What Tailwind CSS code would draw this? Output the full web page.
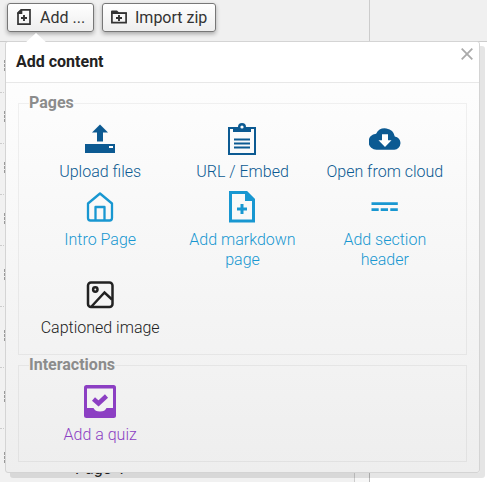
<!DOCTYPE html>
<html lang="en">
<head>
<meta charset="utf-8">
<title>Add content</title>
<script src="https://cdn.jsdelivr.net/npm/@tailwindcss/browser@4"></script>
</head>
<body class="relative h-[482px] w-[487px] overflow-hidden bg-white font-['Roboto',sans-serif] text-base leading-5 text-[#222]">
<header class="flex h-[42px] border-b border-[#ccc] bg-[#f0f0f0]">
  <div class="flex w-[370px] items-start gap-2 border-r border-[#ccc] pt-[3px] pl-[7px]">
    <button class="flex h-[29px] w-[87px] items-center rounded-[3px] border border-[#777] bg-linear-to-b from-white to-[#eee] pl-[9px] text-[#333] shadow-[0_2px_4px_rgba(0,0,0,0.3)]">
      <svg class="-mt-px mr-[9px] h-4 w-[14px]" viewBox="0 0 14 16" fill="none" stroke="#333"><path stroke-width="1.700" d="M4.500.9H13v14.200H1V4.300z"/><path fill="#333" stroke="none" d="M.2 5V3.500L4 0h1.300v5z"/><path stroke-width="1.900" d="M7 6v6M4 9h6"/></svg>
      <span>Add ...</span>
    </button>
    <button class="flex h-[29px] w-[114px] items-center rounded-[3px] border border-[#777] bg-linear-to-b from-white to-[#eee] pl-2 text-[#333] shadow-[0_2px_4px_rgba(0,0,0,0.3)]">
      <svg class="-mt-[2px] mr-2 h-[14px] w-4" viewBox="0 0 16 14" fill="none" stroke="#333"><path stroke-width="1.700" d="M.9 3.100h14.200v9.600H.9z"/><path fill="#333" stroke="none" d="M0 3V1.500Q0 .5 1 .5h5l2 2h7q1 0 1 1.300H0z"/><path stroke-width="1.900" d="M8 5v6M5 8h6"/></svg>
      <span class="whitespace-nowrap">Import zip</span>
    </button>
  </div>
</header>
<main class="flex h-[440px]">
  <div class="w-[355px] border-r border-[#ccc] bg-[#f1f1f1]">
    <div class="h-[51px] border-b border-dotted border-[#ccc] pt-[18px] pl-1"><i class="block h-[11px] w-px bg-[repeating-linear-gradient(#999_0_3px,transparent_3px_4px)]"></i></div>
    <div class="h-[51px] border-b border-dotted border-[#ccc] pt-[18px] pl-1"><i class="block h-[11px] w-px bg-[repeating-linear-gradient(#999_0_3px,transparent_3px_4px)]"></i></div>
    <div class="h-[51px] border-b border-dotted border-[#ccc] pt-[18px] pl-1"><i class="block h-[11px] w-px bg-[repeating-linear-gradient(#999_0_3px,transparent_3px_4px)]"></i></div>
    <div class="h-[51px] border-b border-dotted border-[#ccc] pt-[18px] pl-1"><i class="block h-[11px] w-px bg-[repeating-linear-gradient(#999_0_3px,transparent_3px_4px)]"></i></div>
    <div class="h-[61px] border-b border-dotted border-[#ccc] pt-[23px] pl-1"><i class="block h-[11px] w-px bg-[repeating-linear-gradient(#999_0_3px,transparent_3px_4px)]"></i></div>
    <div class="h-[61px] border-b border-dotted border-[#ccc] pt-[23px] pl-1"><i class="block h-[11px] w-px bg-[repeating-linear-gradient(#999_0_3px,transparent_3px_4px)]"></i></div>
    <div class="h-[61px] border-b border-dotted border-[#ccc] pt-[23px] pl-1"><i class="block h-[11px] w-px bg-[repeating-linear-gradient(#999_0_3px,transparent_3px_4px)]"></i></div>
    <div class="flex h-[53px] pl-1"><i class="mt-[23px] block h-[11px] w-px bg-[repeating-linear-gradient(#999_0_3px,transparent_3px_4px)]"></i><span class="mt-[30px] ml-[70px]">Page 4</span></div>
  </div>
  <div class="w-[15px] border-r border-[#bbb] bg-[#f7f7f7]"></div>
</main>
<section class="absolute top-[41px] left-[5px] h-[432px] w-[475px] rounded-[3px] border border-[#d4d4d4] bg-linear-to-b from-white to-[#eee] shadow-[5px_5px_0_rgba(0,0,0,0.1)]">
  <svg class="absolute -top-[9px] left-[18px] h-[11px] w-6" viewBox="0 0 24 11"><path fill="#fff" d="M0 11 12 0l12 11z"/></svg>
  <div class="flex h-[41px] items-center justify-between rounded-t-[3px] border-b border-[#e8e8e8] bg-white pr-[6px] pl-[10px]">
    <h2 class="font-bold">Add content</h2>
    <svg class="-mt-[16px] h-3 w-3" viewBox="0 0 12 12" stroke="#aaa" stroke-width="1.800"><path d="m.7.7 10.600 10.600M11.300.7.7 11.300"/></svg>
  </div>
  <fieldset class="mt-[10px] ml-3 h-[262px] w-[449px] border border-black/5 px-[10px]">
    <legend class="h-5 font-bold text-[#8c8c8c]">Pages</legend>
    <div class="grid grid-cols-3 gap-y-[9px] pt-[10px] text-center font-light text-[#0c5a92]">
      <div class="flex flex-col items-center gap-[7px]">
        <svg class="h-8 w-8" viewBox="0 0 32 32" fill="#0c5a92"><path d="m16 1.500 8 8h-5v9h-6v-9H8zM1 21h30v9H1z"/><path fill="#fff" d="M25 23h4v2h-4z"/></svg>
        <span>Upload files</span>
      </div>
      <div class="flex flex-col items-center gap-[7px]">
        <svg class="h-8 w-8" viewBox="0 0 32 32" fill="none" stroke="#0c5a92" stroke-width="2"><path d="M3 5h26v26H3z"/><path fill="#0c5a92" stroke="none" d="M7 4h5a4 4 0 0 1 8 0h5v5H7z"/><circle cx="16" cy="4" r="1.600" fill="#fff" stroke="none"/><path d="M8 16.500h16M8 20.500h16M8 24.500h16"/></svg>
        <span>URL / Embed</span>
      </div>
      <div class="flex flex-col items-center gap-[7px]">
        <svg class="h-8 w-8" viewBox="0 0 32 32"><path fill="#0c5a92" d="M25.800 13.400a10 10 0 0 0-18.700-2.700A8 8 0 0 0 8 26.700h17.300a6.700 6.700 0 0 0 .5-13.300z"/><path fill="#fff" d="M13 11.300h6v6h3.500L16 24l-6.500-6.700H13z"/></svg>
        <span>Open from cloud</span>
      </div>
      <div class="flex flex-col items-center gap-[7px] text-[#1897d1]">
        <svg class="h-8 w-8" viewBox="0 0 32 32" fill="none" stroke="#1897d1" stroke-width="2.300" stroke-linejoin="round"><path d="M4 12.500 16 2.500l12 10V27q0 2.500-2.500 2.500h-19Q4 29.500 4 27z"/><path d="M11.500 29V16h9v13"/></svg>
        <span>Intro Page</span>
      </div>
      <div class="flex flex-col items-center gap-[7px] text-[#1897d1]">
        <svg class="h-8 w-8" viewBox="0 0 32 32" fill="none" stroke="#1897d1"><path stroke-width="3" d="M4.500 1.500H20l7.500 7.500v21h-23z"/><path fill="#1897d1" stroke="none" d="M19 0h2l8 8v2H19z"/><path stroke-width="3" d="M16 13v10M11 18h10"/></svg>
        <span>Add markdown<br>page</span>
      </div>
      <div class="flex flex-col items-center gap-[7px] text-[#1897d1]">
        <svg class="h-8 w-8" viewBox="0 0 32 32" fill="#1897d1"><path d="M2.500 11.200h26.300v2.800H2.500zM2.500 17.200h7.200v2.800H2.500zM11.700 17.200H19v2.800h-7.300zM21.300 17.200h7.500v2.800h-7.500z"/></svg>
        <span>Add section<br>header</span>
      </div>
      <div class="flex flex-col items-center gap-[7px] text-[#222]">
        <svg class="h-8 w-8" viewBox="0 0 32 32" fill="none" stroke="#222" stroke-width="2.500"><rect x="4" y="3.500" width="24.500" height="24.500" rx="3"/><circle cx="11.300" cy="10.500" r="2.200"/><path d="M7.500 27.500 20.500 13.500l7.500 7"/></svg>
        <span class="whitespace-nowrap">Captioned image</span>
      </div>
    </div>
  </fieldset>
  <fieldset class="ml-3 h-[107px] w-[449px] border border-black/5 px-[10px]">
    <legend class="h-5 font-bold text-[#8c8c8c]">Interactions</legend>
    <div class="grid grid-cols-3 text-center font-light text-[#8c3fc3]">
      <div class="mt-[10px] flex flex-col items-center gap-[7px]">
        <svg class="h-[33px] w-8" viewBox="0 0 32 33"><rect width="32" height="33" rx="2.500" fill="#8c3fc3"/><path fill="#f2f2f2" d="M3 3.500h26v19.500h-6.500q-1.500 3.500-6.500 3.500t-6.500-3.500H3z"/><path fill="none" stroke="#8c3fc3" stroke-width="4.500" d="m9.500 14 5 4.500 8-7.500"/></svg>
        <span>Add a quiz</span>
      </div>
    </div>
  </fieldset>
</section>
</body>
</html>
